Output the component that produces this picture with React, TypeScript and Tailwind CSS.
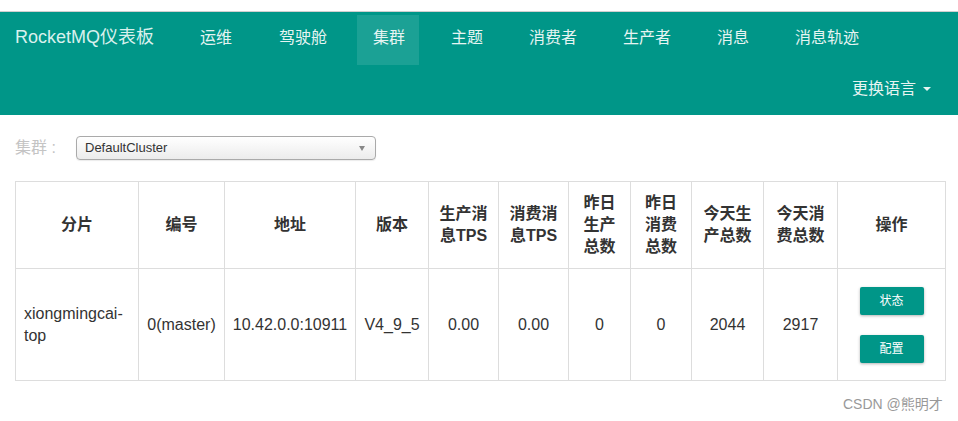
import React from "react";

const font = { fontFamily: '"Liberation Sans", Arial, "Noto Sans CJK SC", sans-serif' };

const navItems = ["运维", "驾驶舱", "集群", "主题", "消费者", "生产者", "消息", "消息轨迹"];
const navX = [200, 279, 373, 451, 529, 623, 717, 795];

const widths = [123, 86, 131, 73, 70, 70, 62, 61, 72, 74, 108];

export default function App() {
  return (
    <div className="w-[958px] h-[421px] bg-white overflow-hidden relative" style={font}>
      <div className="h-[12px] bg-white border-b border-[#cfcfcf]" />
      <div className="h-[103px] bg-[#009688] relative">
        <div className="absolute left-[15px] top-[13px] text-[18px] leading-[24px] text-[#d9f0ed]">RocketMQ仪表板</div>
        <div className="absolute left-[357px] top-[3px] w-[62px] h-[50px] bg-[#1ba195]" />
        {navItems.map((n, i) => (
          <div
            key={n}
            className="absolute top-[15px] text-[16px] leading-[22px] text-[#e6f4f2]"
            style={{ left: navX[i] }}
          >
            {n}
          </div>
        ))}
        <div className="absolute left-[852px] top-[66px] text-[16px] leading-[22px] text-[#e6f4f2] flex items-center">
          更换语言
          <span className="ml-[7px] inline-block w-0 h-0 border-l-[4px] border-r-[4px] border-t-[4px] border-l-transparent border-r-transparent border-t-[#e6f4f2]" />
        </div>
      </div>
      <div className="flex items-center h-[24px] mt-[21px] pl-[15px]">
        <span className="text-[16px] text-[#c4c4c4] w-[61px]">集群 :</span>
        <div className="w-[300px] h-[24px] rounded-[4px] border border-[#aaa] bg-gradient-to-b from-white to-[#ececec] flex items-center justify-between px-[8px] shadow-[0_1px_1px_rgba(0,0,0,0.08)]">
          <span className="text-[13px] text-[#333]">DefaultCluster</span>
          <span className="inline-block w-0 h-0 border-l-[3.5px] border-r-[3.5px] border-t-[5px] border-l-transparent border-r-transparent border-t-[#888] mr-[2px]" />
        </div>
      </div>
      <div className="pl-[15px] mt-[21px]">
        <table className="table-fixed border-collapse w-[930px] text-[#333]">
          <colgroup>
            {widths.map((w, i) => (
              <col key={i} style={{ width: w }} />
            ))}
          </colgroup>
          <thead>
            <tr className="h-[87px]">
              {["分片", "编号", "地址", "版本", "生产消息TPS", "消费消息TPS", "昨日生产总数", "昨日消费总数", "今天生产总数", "今天消费总数", "操作"].map((h) => (
                <th key={h} className="border border-[#ddd] text-[16px] leading-[22px] font-bold text-center px-[8px] align-middle text-[#333]">
                  {h}
                </th>
              ))}
            </tr>
          </thead>
          <tbody>
            <tr className="h-[112px] text-[16px] leading-[22px]">
              <td className="border border-[#ddd] px-[8px] text-left">xiongmingcai-top</td>
              <td className="border border-[#ddd] px-[4px] text-center">0(master)</td>
              <td className="border border-[#ddd] px-[4px] text-center">10.42.0.0:10911</td>
              <td className="border border-[#ddd] px-[4px] text-center">V4_9_5</td>
              <td className="border border-[#ddd] text-center">0.00</td>
              <td className="border border-[#ddd] text-center">0.00</td>
              <td className="border border-[#ddd] text-center">0</td>
              <td className="border border-[#ddd] text-center">0</td>
              <td className="border border-[#ddd] text-center">2044</td>
              <td className="border border-[#ddd] text-center">2917</td>
              <td className="border border-[#ddd] text-center">
                <div className="flex flex-col items-center gap-[20px]">
                  <button className="w-[64px] h-[28px] bg-[#009688] text-white text-[12px] rounded-[2px] shadow-[0_1px_3px_rgba(0,0,0,0.3)]">状态</button>
                  <button className="w-[64px] h-[28px] bg-[#009688] text-white text-[12px] rounded-[2px] shadow-[0_1px_3px_rgba(0,0,0,0.3)]">配置</button>
                </div>
              </td>
            </tr>
          </tbody>
        </table>
      </div>
      <div className="absolute left-[843px] top-[394px] text-[14px] text-[#999]">CSDN @熊明才</div>
    </div>
  );
}
